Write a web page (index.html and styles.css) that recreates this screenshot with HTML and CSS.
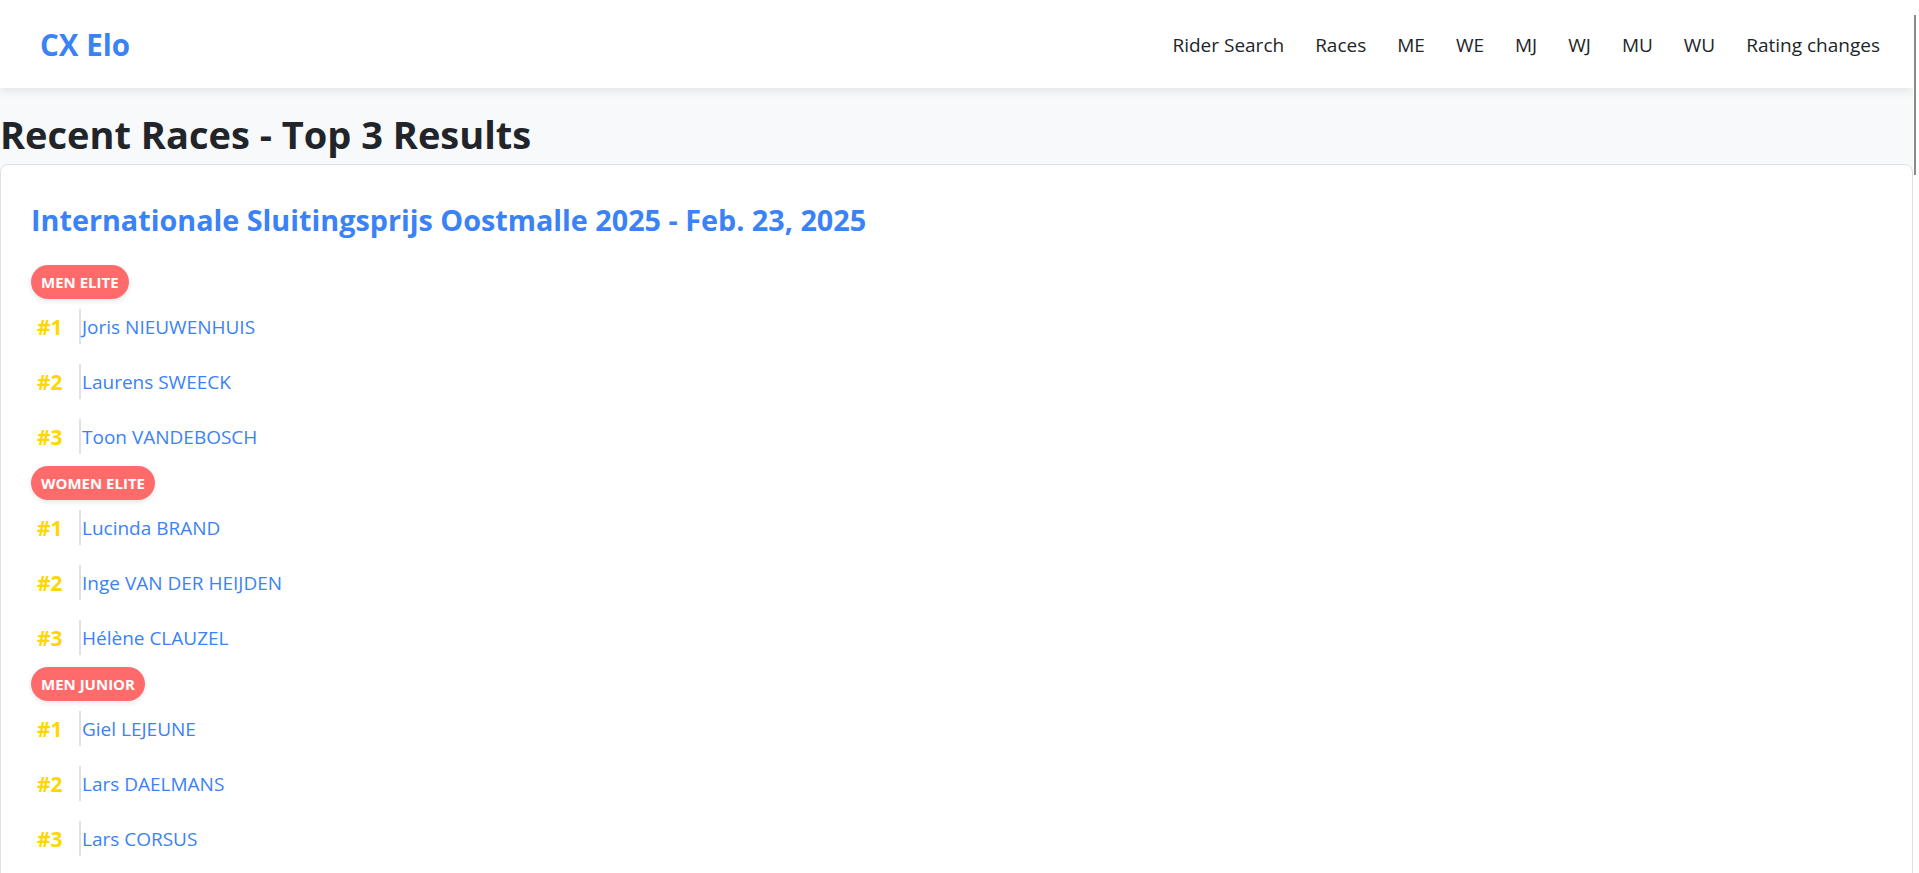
FILE: index.html
```html
<!DOCTYPE html>
<html lang="en">
<head>
<meta charset="utf-8">
<title>CX Elo - Recent Races</title>
<link rel="stylesheet" href="styles.css">
</head>
<body>
<header class="navbar">
  <a class="brand" href="#">CX Elo</a>
  <nav class="nav">
    <a href="#">Rider Search</a>
    <a href="#">Races</a>
    <a href="#">ME</a>
    <a href="#">WE</a>
    <a href="#">MJ</a>
    <a href="#">WJ</a>
    <a href="#">MU</a>
    <a href="#">WU</a>
    <a href="#">Rating changes</a>
  </nav>
</header>
<main class="content">
  <h1 class="page-title">Recent Races - Top 3 Results</h1>
  <section class="race-card">
    <h2 class="race-title"><a href="#">Internationale Sluitingsprijs Oostmalle 2025 - Feb. 23, 2025</a></h2>
    <div class="category">
      <span class="badge">Men Elite</span>
      <ul class="results">
        <li class="result"><span class="rank">#1</span><a class="name" href="#">Joris NIEUWENHUIS</a></li>
        <li class="result"><span class="rank">#2</span><a class="name" href="#">Laurens SWEECK</a></li>
        <li class="result"><span class="rank">#3</span><a class="name" href="#">Toon VANDEBOSCH</a></li>
      </ul>
    </div>
    <div class="category">
      <span class="badge">Women Elite</span>
      <ul class="results">
        <li class="result"><span class="rank">#1</span><a class="name" href="#">Lucinda BRAND</a></li>
        <li class="result"><span class="rank">#2</span><a class="name" href="#">Inge VAN DER HEIJDEN</a></li>
        <li class="result"><span class="rank">#3</span><a class="name" href="#">Hélène CLAUZEL</a></li>
      </ul>
    </div>
    <div class="category">
      <span class="badge">Men Junior</span>
      <ul class="results">
        <li class="result"><span class="rank">#1</span><a class="name" href="#">Giel LEJEUNE</a></li>
        <li class="result"><span class="rank">#2</span><a class="name" href="#">Lars DAELMANS</a></li>
        <li class="result"><span class="rank">#3</span><a class="name" href="#">Lars CORSUS</a></li>
      </ul>
    </div>
  </section>
</main>
<div class="scroll-thumb"></div>
</body>
</html>
```
FILE: styles.css
```css
html {
  background: #ffffff;
  overflow: hidden;
}
body {
  margin: 0;
  width: calc(100% - 6px);
  min-height: 100vh;
  background: #f8f9fa;
  font-family: "Segoe UI", "Open Sans", "Noto Sans", sans-serif;
  color: #212529;
}
a {
  text-decoration: none;
}
.navbar {
  height: 88px;
  display: flex;
  align-items: center;
  justify-content: space-between;
  padding: 0 33px 0 40px;
  background: #ffffff;
  box-shadow: 0 2px 10px rgba(0, 0, 0, 0.1);
}
.brand {
  color: #3b82f6;
  font-weight: 700;
  font-size: 29.5px;
}
.nav {
  display: flex;
  gap: 31px;
  padding-top: 2px;
}
.nav a {
  color: #212529;
  font-size: 19px;
}
.content {
  padding-top: 22px;
}
.page-title {
  margin: 0 0 6px;
  font-size: 38px;
  line-height: 48px;
  font-weight: 700;
}
.race-card {
  background: #ffffff;
  border: 1px solid #dee2e6;
  border-radius: 8px;
  padding: 30px 30px 30px 30px;
}
.race-title {
  margin: 8px 0 28px;
  font-size: 28.75px;
  line-height: 34px;
  font-weight: 700;
}
.race-title a {
  color: #3b82f6;
}
.category + .category {
  margin-top: 2px;
}
.badge {
  display: inline-block;
  background: #ff6b6b;
  color: #ffffff;
  font-size: 15px;
  font-weight: 700;
  line-height: 24px;
  padding: 5px 10px;
  border-radius: 17px;
  text-transform: uppercase;
  box-shadow: 0 2px 5px rgba(0, 0, 0, 0.1);
}
.results {
  list-style: none;
  margin: 0;
  padding: 0;
}
.result {
  display: flex;
  align-items: center;
  padding: 10px 0;
}
.rank {
  width: 42px;
  padding-left: 6px;
  color: #ffd700;
  font-weight: 700;
  font-size: 21px;
}
.name {
  display: flex;
  align-items: center;
  height: 35px;
  border-left: 2px solid #dee2e6;
  padding-left: 1px;
  color: #3b82f6;
  font-size: 19px;
}
.scroll-thumb {
  position: fixed;
  top: 15px;
  right: 3px;
  width: 2px;
  height: 160px;
  background: #8a8a8a;
}
```
